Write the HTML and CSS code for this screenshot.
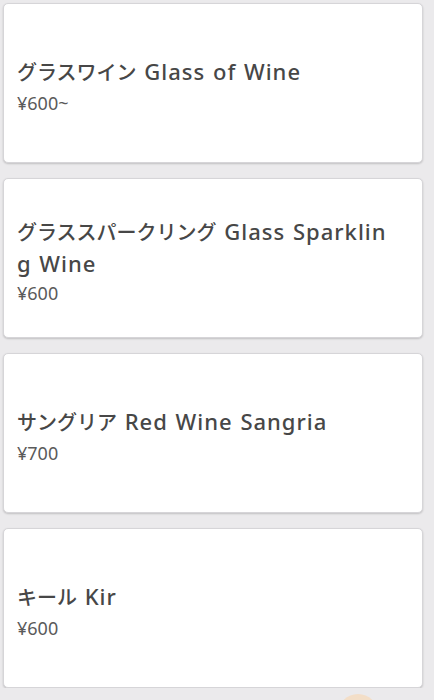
FILE: index.html
```html
<!DOCTYPE html>
<html lang="ja">
<head>
  <meta charset="UTF-8" />
  <meta name="viewport" content="width=device-width, initial-scale=1.0"/>
  <title>Wine Menu</title>
  <link rel="stylesheet" href="styles.css">
</head>
<body>
  <div class="menu">
    <!-- Wine items -->
    <div class="card">
      <h2 class="item-name"><span class="ja">グラスワイン</span> Glass of Wine</h2>
      <p class="item-price">¥600~</p>
    </div>

    <div class="card">
      <h2 class="item-name"><span class="ja">グラススパークリング</span> Glass Sparkling Wine</h2>
      <p class="item-price">¥600</p>
    </div>

    <div class="card">
      <h2 class="item-name"><span class="ja">サングリア</span> Red Wine Sangria</h2>
      <p class="item-price">¥700</p>
    </div>

    <div class="card">
      <h2 class="item-name"><span class="ja">キール</span> Kir</h2>
      <p class="item-price">¥600</p>
    </div>
  </div>

  <div class="fab"></div>
</body>
</html>
```

FILE: styles.css
```css
body {
  margin: 0;
  font-family: 'Noto Sans', 'Noto Sans CJK JP', sans-serif;
  background: #ebeaec;
  color: #454545;
  overflow: hidden;
}

.menu {
  display: flex;
  flex-direction: column;
  gap: 15px;
  padding: 3px 11px 0 3px;
}

.card {
  height: 160px;
  box-sizing: border-box;
  display: flex;
  flex-direction: column;
  justify-content: center;
  padding: 8px 22px 0 13px;
  background: #fff;
  border: 1px solid #d6d5d8;
  border-radius: 5px;
  box-shadow: 0 1px 2px rgba(0,0,0,0.18);
}

.item-name {
  margin: 0;
  font-size: 22px;
  font-weight: 500;
  line-height: 30px;
  letter-spacing: 1px;
  word-spacing: 1px;
  word-break: break-all;
  color: #474747;
}

.item-name .ja {
  font-size: 20px;
  letter-spacing: 0;
}

.item-price {
  margin: 0;
  font-size: 18px;
  line-height: 30px;
  color: #5a5a5a;
}

.fab {
  position: fixed;
  left: 338px;
  top: 694px;
  width: 40px;
  height: 40px;
  border-radius: 50%;
  background: #f7d9b8;
  opacity: 0.7;
}
```
